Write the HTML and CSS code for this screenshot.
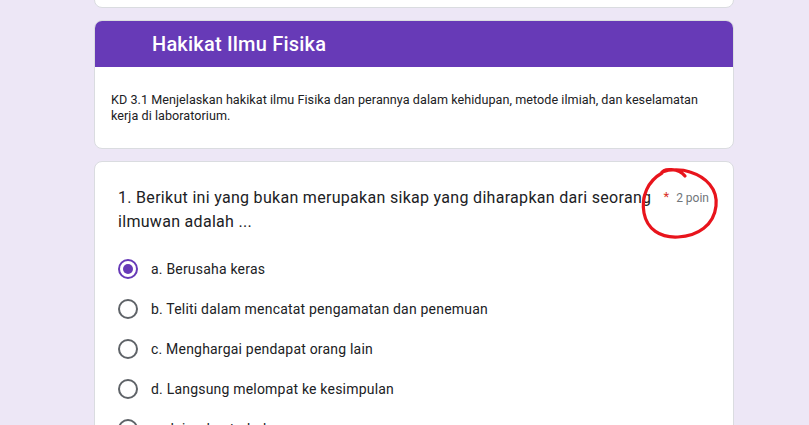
FILE: index.html
```html
<!DOCTYPE html>
<html lang="id">
<head>
<meta charset="utf-8">
<title>Hakikat Ilmu Fisika</title>
<link rel="stylesheet" href="styles.css">
</head>
<body>
<div class="page">
  <div class="card card-prev"></div>

  <div class="card section">
    <div class="section-head">
      <h2 class="section-title">Hakikat Ilmu Fisika</h2>
    </div>
    <div class="section-desc">
      KD 3.1 Menjelaskan hakikat ilmu Fisika dan perannya dalam kehidupan, metode ilmiah, dan keselamatan kerja di laboratorium.
    </div>
  </div>

  <div class="card question">
    <div class="q-head">
      <div class="q-text">1. Berikut ini yang bukan merupakan sikap yang diharapkan dari seorang ilmuwan adalah ...</div>
      <div class="q-meta"><span class="req">*</span><span class="points">2 poin</span></div>
      <svg class="scribble" width="90" height="80" viewBox="0 0 90 80" aria-hidden="true">
        <path d="M46 9 C40 1, 24 1, 23 6 C9 14, 2 29, 5 46 C8 62, 21 71, 39 70 C59 69, 75 58, 77 39 C79 22, 67 10, 51 5 C43 2, 31 2, 23 5" fill="none" stroke="#e8141c" stroke-width="3.2" stroke-linecap="round" stroke-linejoin="round"/>
      </svg>
    </div>
    <ul class="options">
      <li class="option"><span class="radio checked"></span><span class="opt-label">a. Berusaha keras</span></li>
      <li class="option"><span class="radio"></span><span class="opt-label">b. Teliti dalam mencatat pengamatan dan penemuan</span></li>
      <li class="option"><span class="radio"></span><span class="opt-label">c. Menghargai pendapat orang lain</span></li>
      <li class="option"><span class="radio"></span><span class="opt-label">d. Langsung melompat ke kesimpulan</span></li>
      <li class="option"><span class="radio"></span><span class="opt-label">e. Jujur dan terbuka</span></li>
    </ul>
  </div>
</div>
</body>
</html>
```

FILE: styles.css
```css
* { box-sizing: border-box; }
html, body {
  margin: 0;
  padding: 0;
  background: #ede7f6;
  height: 100%;
  overflow: hidden;
}
body {
  font-family: Roboto, "Liberation Sans", Arial, sans-serif;
  color: #202124;
}
.page {
  width: 640px;
  margin-left: 94px;
  display: flex;
  flex-direction: column;
  gap: 12px;
}
.card {
  background: #fff;
  border: 1px solid #dadce0;
  border-radius: 8px;
  overflow: hidden;
}
.card-prev {
  height: 40px;
  margin-top: -32px;
}
.section-head {
  background: #673ab7;
  height: 47px;
  margin: -1px -1px 0;
  display: flex;
  align-items: center;
  padding-left: 58px;
  border-radius: 8px 8px 0 0;
}
.section-title {
  margin: 0;
  color: #fff;
  font-size: 20px;
  font-weight: 500;
  letter-spacing: 0.2px;
  line-height: 24px;
}
.section-desc {
  padding: 25px 16px 24px 16px;
  font-size: 12.6px;
  line-height: 16px;
  letter-spacing: 0.05px;
  color: #202124;
}
.question {
  padding: 24px 24px 0 23px;
  height: 300px;
  overflow: visible;
}
.q-head {
  position: relative;
  display: flex;
  align-items: flex-start;
  gap: 2px;
}
.q-text {
  flex: 1;
  font-size: 16px;
  line-height: 24px;
  letter-spacing: 0.3px;
  color: #202124;
}
.q-meta {
  display: flex;
  align-items: baseline;
  gap: 7px;
  padding-top: 3px;
  white-space: nowrap;
}
.req {
  color: #d93025;
  font-size: 13px;
  line-height: 16px;
  position: relative;
  top: -1px;
}
.points {
  color: #70757a;
  font-size: 12px;
  line-height: 18px;
}
.scribble {
  position: absolute;
  right: -20px;
  top: -19px;
}
.options {
  list-style: none;
  margin: 25px 0 0;
  padding: 0;
  display: flex;
  flex-direction: column;
  gap: 20px;
}
.option {
  display: flex;
  align-items: center;
  height: 20px;
}
.radio {
  width: 20px;
  height: 20px;
  border: 2px solid #5f6368;
  border-radius: 50%;
  display: flex;
  align-items: center;
  justify-content: center;
  flex-shrink: 0;
}
.radio.checked {
  border-color: #673ab7;
}
.radio.checked::after {
  content: "";
  width: 10px;
  height: 10px;
  border-radius: 50%;
  background: #673ab7;
}
.opt-label {
  margin-left: 13px;
  font-size: 14px;
  line-height: 20px;
  letter-spacing: 0.2px;
  color: #202124;
}
```
